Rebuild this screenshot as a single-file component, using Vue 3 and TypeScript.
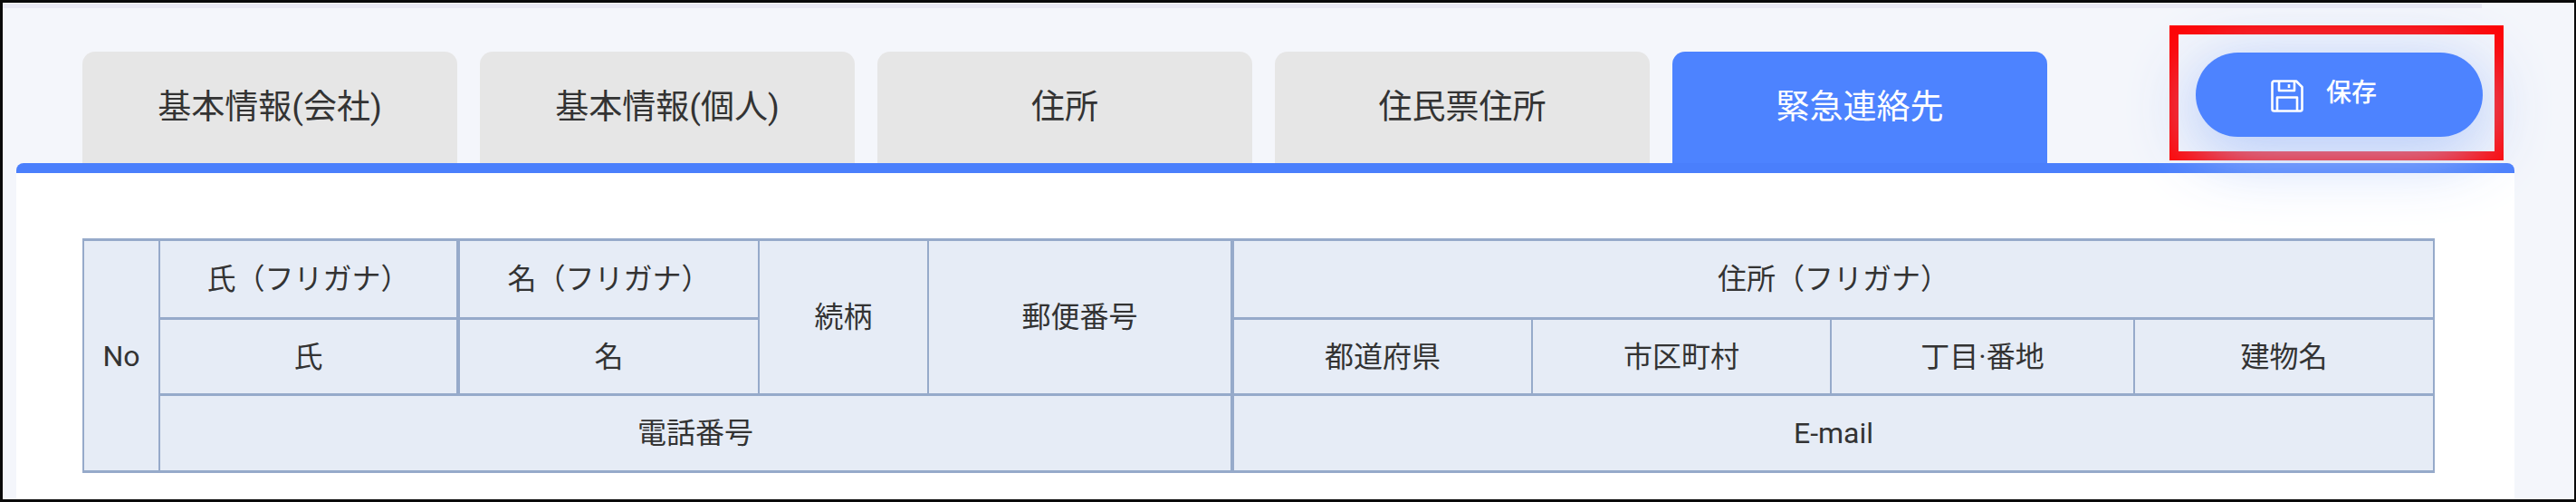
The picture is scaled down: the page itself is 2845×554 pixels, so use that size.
<script setup lang="ts">
const tabs: { label: string; active?: boolean }[] = [
  { label: '基本情報(会社)' },
  { label: '基本情報(個人)' },
  { label: '住所' },
  { label: '住民票住所' },
  { label: '緊急連絡先', active: true },
]
const colWidths: number[] = [84, 330, 332, 187, 336, 331, 330, 335, 331]
</script>

<template>
  <div class="frame">
    <div class="topline"></div>
    <div class="head">
      <div class="tabs">
        <div v-for="t in tabs" :key="t.label" class="tab" :class="{ active: t.active }">{{ t.label }}</div>
      </div>
      <button class="save" type="button">
        <svg class="save-icon" viewBox="0 0 38 38" fill="none" stroke="#fff" stroke-width="2.6" stroke-linejoin="round">
          <path d="M4 2.5H29L35.5 9V33.500a2 2 0 0 1-2 2H4.500a2 2 0 0 1-2-2V4.500a2 2 0 0 1 2-2Z" />
          <path d="M10 3V13H27V3" />
          <path d="M21 6V10" />
          <path d="M8 35V20.500H30V35" />
        </svg>
        <span>保存</span>
      </button>
    </div>
    <div class="panel">
      <table class="grid">
        <colgroup>
          <col v-for="(w, i) in colWidths" :key="i" :style="{ width: w + 'px' }" />
        </colgroup>
        <tbody>
          <tr class="r1">
            <td rowspan="3">No</td>
            <td class="thick-r">氏（フリガナ）</td>
            <td>名（フリガナ）</td>
            <td rowspan="2">続柄</td>
            <td rowspan="2" class="thick-r">郵便番号</td>
            <td colspan="4">住所（フリガナ）</td>
          </tr>
          <tr class="r2">
            <td class="thick-r">氏</td>
            <td>名</td>
            <td>都道府県</td>
            <td>市区町村</td>
            <td>丁目·番地</td>
            <td>建物名</td>
          </tr>
          <tr class="r3">
            <td colspan="4" class="thick-r">電話番号</td>
            <td colspan="4">E-mail</td>
          </tr>
        </tbody>
      </table>
    </div>
    <div class="mark"></div>
  </div>
</template>

<style>
html, body {
  margin: 0;
  padding: 0;
  background: #fff;
}
</style>

<style scoped>
.frame {
  position: relative;
  box-sizing: border-box;
  width: 2845px;
  height: 554px;
  border: 3px solid #0a0a0a;
  border-right-width: 2px;
  background: #f4f6fb;
  overflow: hidden;
  font-family: Roboto, "Noto Sans CJK JP", sans-serif;
  color: #333;
}
.topline {
  width: 2738px;
  height: 5px;
  margin-top: 1px;
  background: #e9e9f4;
}
.head {
  display: flex;
  align-items: flex-start;
  margin-top: 48px;
  padding-left: 88px;
  height: 123px;
}
.tabs {
  display: flex;
  gap: 25px;
}
.tab {
  box-sizing: border-box;
  width: 414px;
  height: 123px;
  display: flex;
  align-items: center;
  justify-content: center;
  background: #e6e6e6;
  border-radius: 14px 14px 0 0;
  font-size: 37px;
  line-height: 1;
}
.tab.active {
  background: #4d83ff;
  color: #fff;
}
.save {
  position: relative;
  z-index: 1;
  box-sizing: border-box;
  margin: 1px 0 0 164px;
  width: 317px;
  height: 93px;
  padding: 0 0 0 82px;
  display: flex;
  align-items: center;
  gap: 24px;
  border: 0;
  border-radius: 47px;
  background: #4d83ff;
  color: #fff;
  font-family: inherit;
  font-size: 28px;
  font-weight: 500;
  line-height: 1;
  box-shadow: 0 15px 70px 5px rgba(175, 198, 250, 0.9);
}
.save-icon {
  width: 38px;
  height: 38px;
  margin-top: 3px;
}
.save span {
  margin-top: -4px;
}
.panel {
  box-sizing: border-box;
  width: 2759px;
  height: 375px;
  margin-left: 15px;
  border-top: 11px solid #4a7ffc;
  border-radius: 8px 8px 0 0;
  padding: 72px 0 0 73px;
  background: #fff;
}
.grid {
  width: 2596px;
  table-layout: fixed;
  border-collapse: collapse;
  background: #e6ecf6;
  font-size: 32px;
  line-height: 1;
  text-align: center;
}
.grid td {
  padding: 0;
  border: 3px solid #96aaca;
  border-left-width: 2px;
  border-right-width: 2px;
}
.grid td.thick-r {
  border-right-width: 4px;
}
.r1 {
  height: 87px;
}
.r2 {
  height: 84px;
}
.r3 {
  height: 85px;
}
.mark {
  position: absolute;
  left: 2393px;
  top: 25px;
  box-sizing: border-box;
  width: 369px;
  height: 149px;
  border: 10px solid #ff0000;
}
</style>
